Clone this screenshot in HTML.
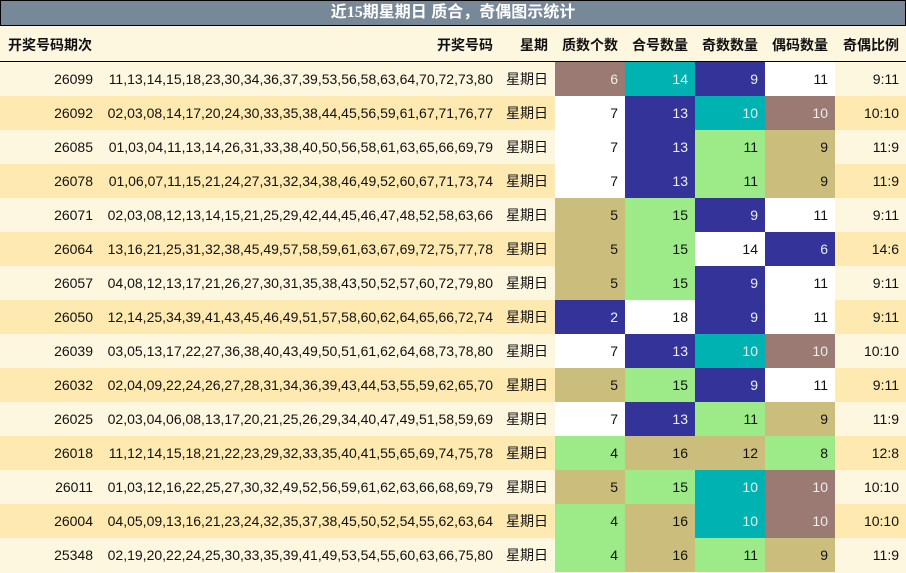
<!DOCTYPE html>
<html><head><meta charset="utf-8"><style>
body{margin:0;width:906px;height:573px;overflow:hidden;background:#fef7e0;font-family:"Liberation Sans","Noto Sans CJK SC",sans-serif;font-size:14px;color:#111}
.t{position:absolute;left:0;top:0;width:904px;height:24px;background:#778899;border:1px solid #000;color:#fff;font-weight:bold;font-size:16px;text-align:center;line-height:24px}
.t span{font-family:"Liberation Serif",serif}
.h{position:absolute;left:0;top:26px;width:906px;height:35px;border-bottom:1px solid #000;font-weight:bold}
.r{position:absolute;left:0;width:906px;height:34px}
.c{position:absolute;top:0;height:100%;line-height:34px;text-align:right;box-sizing:border-box;padding-right:7px;white-space:nowrap}
.h .c{line-height:38px}
.B{background:#9a7a72;color:#eee}.T{background:#00b2b2;color:#eee}.N{background:#333399;color:#eee}.G{background:#9cea88}.K{background:#cbbe7d}.W{background:#fff}
</style></head><body>
<div class="t">近<span>15</span>期星期日 质合，奇偶图示统计</div>
<div class="h">
<div class="c" style="left:0;width:100px;text-align:left;padding-left:8px">开奖号码期次</div>
<div class="c" style="left:100px;width:400px">开奖号码</div>
<div class="c" style="left:500px;width:55px">星期</div>
<div class="c" style="left:555px;width:70px">质数个数</div>
<div class="c" style="left:625px;width:70px">合号数量</div>
<div class="c" style="left:695px;width:70px">奇数数量</div>
<div class="c" style="left:765px;width:70px">偶码数量</div>
<div class="c" style="left:835px;width:71px">奇偶比例</div>
</div>
<div id="rows"></div>
<script>
var d=[
["26099","11,13,14,15,18,23,30,34,36,37,39,53,56,58,63,64,70,72,73,80","6B","14T","9N","11W","9:11"],
["26092","02,03,08,14,17,20,24,30,33,35,38,44,45,56,59,61,67,71,76,77","7W","13N","10T","10B","10:10"],
["26085","01,03,04,11,13,14,26,31,33,38,40,50,56,58,61,63,65,66,69,79","7W","13N","11G","9K","11:9"],
["26078","01,06,07,11,15,21,24,27,31,32,34,38,46,49,52,60,67,71,73,74","7W","13N","11G","9K","11:9"],
["26071","02,03,08,12,13,14,15,21,25,29,42,44,45,46,47,48,52,58,63,66","5K","15G","9N","11W","9:11"],
["26064","13,16,21,25,31,32,38,45,49,57,58,59,61,63,67,69,72,75,77,78","5K","15G","14W","6N","14:6"],
["26057","04,08,12,13,17,21,26,27,30,31,35,38,43,50,52,57,60,72,79,80","5K","15G","9N","11W","9:11"],
["26050","12,14,25,34,39,41,43,45,46,49,51,57,58,60,62,64,65,66,72,74","2N","18W","9N","11W","9:11"],
["26039","03,05,13,17,22,27,36,38,40,43,49,50,51,61,62,64,68,73,78,80","7W","13N","10T","10B","10:10"],
["26032","02,04,09,22,24,26,27,28,31,34,36,39,43,44,53,55,59,62,65,70","5K","15G","9N","11W","9:11"],
["26025","02,03,04,06,08,13,17,20,21,25,26,29,34,40,47,49,51,58,59,69","7W","13N","11G","9K","11:9"],
["26018","11,12,14,15,18,21,22,23,29,32,33,35,40,41,55,65,69,74,75,78","4G","16K","12K","8G","12:8"],
["26011","01,03,12,16,22,25,27,30,32,49,52,56,59,61,62,63,66,68,69,79","5K","15G","10T","10B","10:10"],
["26004","04,05,09,13,16,21,23,24,32,35,37,38,45,50,52,54,55,62,63,64","4G","16K","10T","10B","10:10"],
["25348","02,19,20,22,24,25,30,33,35,39,41,49,53,54,55,60,63,66,75,80","4G","16K","11G","9K","11:9"]];
var h="";
d.forEach(function(r,i){
var bg=i%2?"#feeab0":"#fef7e0";
h+='<div class="r" style="top:'+(62+34*i)+'px;background:'+bg+'">';
h+='<div class="c" style="left:0;width:100px">'+r[0]+'</div>';
h+='<div class="c" style="left:100px;width:400px">'+r[1]+'</div>';
h+='<div class="c" style="left:500px;width:55px">星期日</div>';
var L=[555,625,695,765];
for(var k=0;k<4;k++){var v=r[2+k];h+='<div class="c '+v.slice(-1)+'" style="left:'+L[k]+'px;width:70px">'+v.slice(0,-1)+'</div>';}
h+='<div class="c" style="left:835px;width:71px">'+r[6]+'</div></div>';
});
document.getElementById("rows").innerHTML=h;
</script>
</body></html>
